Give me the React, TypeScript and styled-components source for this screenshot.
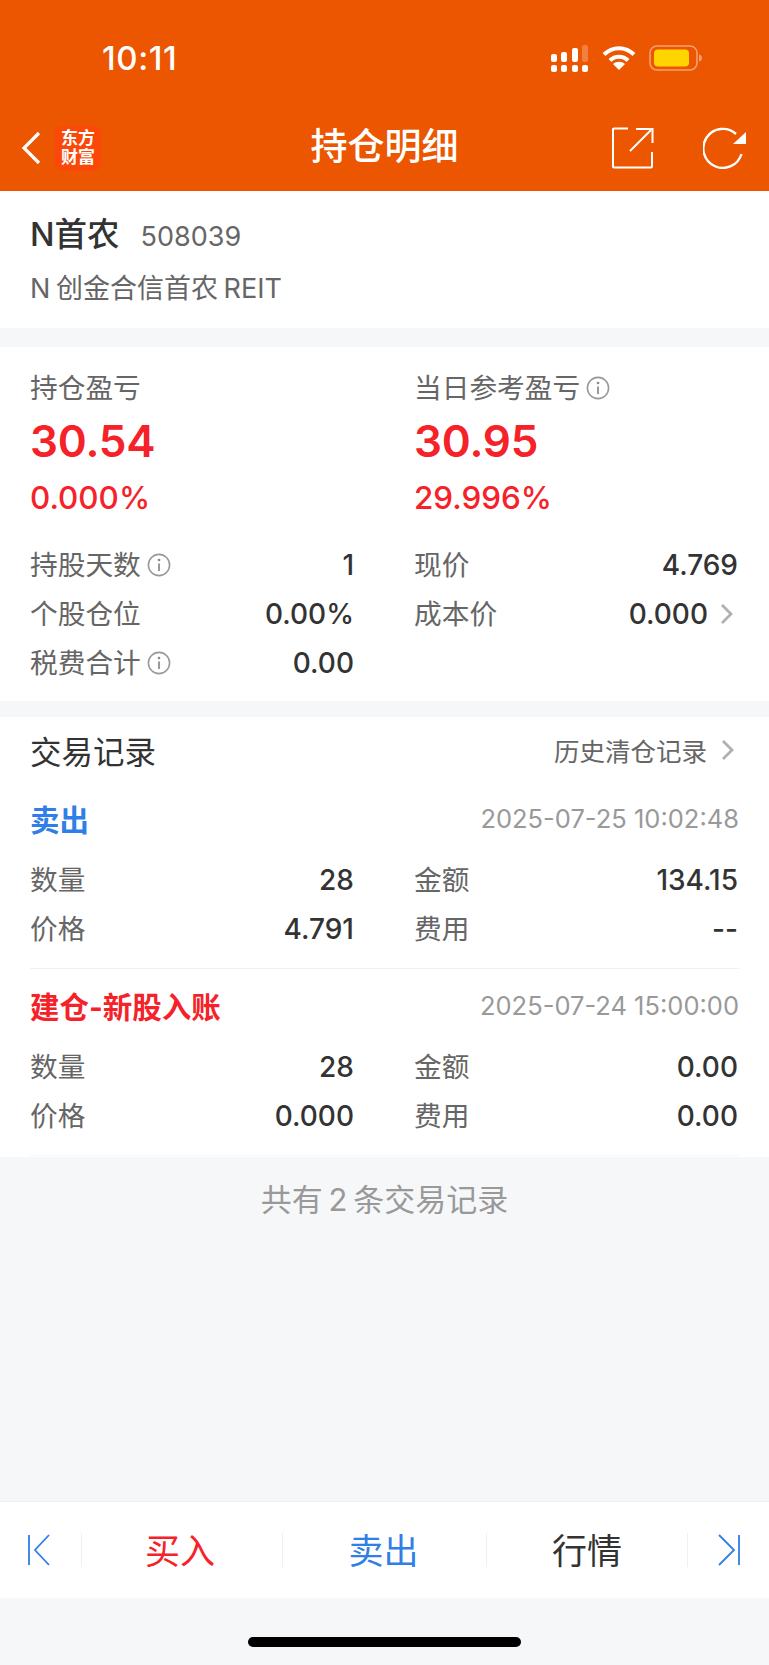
import React, { FC } from 'react';
import styled, { createGlobalStyle } from 'styled-components';

const FONT = `Inter, "Noto Sans CJK SC", sans-serif`;
const RED = '#f5222a';
const BLUE = '#2f7fe6';

const GlobalStyle = createGlobalStyle`
  html, body {
    margin: 0;
    padding: 0;
    background: #f6f7f9;
  }
  * {
    box-sizing: border-box;
  }
`;

const InfoIcon: FC = () => (
  <InfoSvg viewBox="0 0 24 24" fill="none">
    <circle cx="12" cy="12" r="10.6" stroke="#999" strokeWidth="1.6" />
    <circle cx="12" cy="7" r="1.3" fill="#888" />
    <path d="M12 10.5v7.5" stroke="#888" strokeWidth="1.7" />
  </InfoSvg>
);

const Chevron: FC = () => (
  <ChevronSvg viewBox="0 0 13 22" fill="none">
    <path d="M2 2l9 9-9 9" stroke="#b0b0b0" strokeWidth="2.8" />
  </ChevronSvg>
);

const StatusBar: FC = () => (
  <StatusRow>
    <Clock>10:11</Clock>
    <StatusIcons>
      <svg width="38" height="27" viewBox="0 0 38 27">
        <g fill="#fff">
          <rect x="0" y="20" width="6" height="7" rx="2" />
          <rect x="10" y="20" width="6" height="7" rx="2" />
          <rect x="21" y="20" width="6" height="7" rx="2" />
          <rect x="31" y="20" width="6" height="7" rx="2" />
          <rect x="0" y="9" width="6" height="8" rx="2" />
          <rect x="10" y="7" width="6" height="10" rx="2" />
          <rect x="21" y="3" width="6" height="14" rx="2" />
          <rect x="31" y="0" width="6" height="17" rx="2" opacity="0.25" />
        </g>
      </svg>
      <svg width="34" height="26" viewBox="0 0 34 26" fill="none">
        <path d="M2 9.5C10.5 1 23.500 1 32 9.5" stroke="#fff" strokeWidth="4" />
        <path d="M8 15.500c5-5 13-5 18 0" stroke="#fff" strokeWidth="4" />
        <path d="M17 25l-6-6c3.200-3 8.800-3 12 0z" fill="#fff" />
      </svg>
      <svg width="54" height="26" viewBox="0 0 54 26" fill="none">
        <rect x="1" y="1" width="47" height="24" rx="7" stroke="#fff" strokeOpacity="0.45" strokeWidth="1.500" />
        <rect x="5" y="4.500" width="35" height="17" rx="4" fill="#ffd400" />
        <path d="M50 9.500c2 .5 3 2 3 3.500s-1 3-3 3.500z" fill="#fff" fillOpacity="0.45" />
      </svg>
    </StatusIcons>
  </StatusRow>
);

interface StatProps {
  label: string;
  value: string;
  info?: boolean;
  more?: boolean;
}

const Stat: FC<StatProps> = ({ label, value, info, more }) => (
  <StatRow>
    <Label>
      {label}
      {info && <InfoIcon />}
    </Label>
    <Value>
      {value}
      {more && <Chevron />}
    </Value>
  </StatRow>
);

interface TradeProps {
  title: string;
  time: string;
  color: string;
  qty: string;
  amount: string;
  price: string;
  fee: string;
  last?: boolean;
}

const Trade: FC<TradeProps> = ({ title, time, color, qty, amount, price, fee, last }) => (
  <TradeBlock $last={last}>
    <TradeHead>
      <TradeTitle $color={color}>{title}</TradeTitle>
      <TradeTime>{time}</TradeTime>
    </TradeHead>
    <StatGrid>
      <Stat label="数量" value={qty} />
      <Stat label="金额" value={amount} />
      <Stat label="价格" value={price} />
      <Stat label="费用" value={fee} />
    </StatGrid>
  </TradeBlock>
);

const App: FC = () => (
  <>
    <GlobalStyle />
    <Page>
      <Header>
        <StatusBar />
        <NavBar>
          <NavLeft>
            <svg width="22" height="36" viewBox="0 0 22 36" fill="none">
              <path d="M18 3L3 18l15 15" stroke="#fff" strokeWidth="3.200" />
            </svg>
            <Logo>
              <span>东方</span>
              <span>财富</span>
            </Logo>
          </NavLeft>
          <NavTitle>持仓明细</NavTitle>
          <NavRight>
            <svg width="42" height="42" viewBox="0 0 42 42" fill="none">
              <path d="M16 1.500H2a1 1 0 0 0-1 1v37a1 1 0 0 0 1 1h37a1 1 0 0 0 1-1V25" stroke="#fff" strokeWidth="2" />
              <path d="M18 24L39 3" stroke="#fff" strokeWidth="2" />
              <path d="M24 2h16.500v14" stroke="#fff" strokeWidth="2" />
            </svg>
            <svg width="43" height="42" viewBox="0 0 43 42" fill="none">
              <path d="M38.500 27A19.500 19.500 0 1 1 33 7" stroke="#fff" strokeWidth="2.400" />
              <path d="M43 5v12H30z" fill="#fff" />
            </svg>
          </NavRight>
        </NavBar>
      </Header>

      <StockCard>
        <StockLine>
          <StockName>N首农</StockName>
          <StockCode>508039</StockCode>
        </StockLine>
        <StockFull>N 创金合信首农 REIT</StockFull>
      </StockCard>

      <SummaryCard>
        <ProfitGrid>
          <div>
            <Label>持仓盈亏</Label>
            <BigNumber>30.54</BigNumber>
            <Percent>0.000%</Percent>
          </div>
          <div>
            <Label>
              当日参考盈亏
              <InfoIcon />
            </Label>
            <BigNumber>30.95</BigNumber>
            <Percent>29.996%</Percent>
          </div>
        </ProfitGrid>
        <StatGrid>
          <Stat label="持股天数" value="1" info />
          <Stat label="现价" value="4.769" />
          <Stat label="个股仓位" value="0.00%" />
          <Stat label="成本价" value="0.000" more />
          <Stat label="税费合计" value="0.00" info />
        </StatGrid>
      </SummaryCard>

      <RecordsCard>
        <RecordsHead>
          <RecordsTitle>交易记录</RecordsTitle>
          <HistoryLink>
            历史清仓记录
            <Chevron />
          </HistoryLink>
        </RecordsHead>
        <Trade title="卖出" time="2025-07-25 10:02:48" color={BLUE} qty="28" amount="134.15" price="4.791" fee="--" />
        <Trade title="建仓-新股入账" time="2025-07-24 15:00:00" color={RED} qty="28" amount="0.00" price="0.000" fee="0.00" last />
      </RecordsCard>

      <RecordsCount>共有 2 条交易记录</RecordsCount>

      <BottomBar>
        <EdgeButton $side="left">
          <svg width="24" height="32" viewBox="0 0 24 32" fill="none">
            <path d="M2 1v30M22 1L8 16l14 15" stroke={BLUE} strokeWidth="1.800" />
          </svg>
        </EdgeButton>
        <ActionButton $color={RED} $inset={4}>买入</ActionButton>
        <ActionButton $color={BLUE} $inset={2}>卖出</ActionButton>
        <ActionButton $color="#333">行情</ActionButton>
        <EdgeButton $side="right">
          <svg width="24" height="32" viewBox="0 0 24 32" fill="none">
            <path d="M22 1v30M2 1l15 15L2 31" stroke={BLUE} strokeWidth="1.800" />
          </svg>
        </EdgeButton>
      </BottomBar>
      <HomeArea>
        <HomeBar />
      </HomeArea>
    </Page>
  </>
);

const Page = styled.div`
  display: flex;
  flex-direction: column;
  width: 769px;
  height: 1665px;
  overflow: hidden;
  background: #f6f7f9;
  font-family: ${FONT};
  color: #333;
`;

const Header = styled.header`
  height: 191px;
  flex: none;
  padding-top: 40px;
  background: #ec5600;
`;

const StatusRow = styled.div`
  display: flex;
  align-items: center;
  justify-content: space-between;
  height: 36px;
  padding: 0 66px 0 102px;
`;

const Clock = styled.span`
  font-size: 33px;
  font-weight: 500;
  letter-spacing: 0.6px;
  color: #fff;
`;

const StatusIcons = styled.div`
  display: flex;
  align-items: center;
  gap: 13px;
`;

const NavBar = styled.div`
  position: relative;
  display: flex;
  align-items: center;
  justify-content: space-between;
  height: 46px;
  margin-top: 49px;
  padding: 0 23px 0 21px;
`;

const NavLeft = styled.div`
  display: flex;
  align-items: center;
  gap: 12px;
`;

const Logo = styled.div`
  display: flex;
  flex-direction: column;
  align-items: center;
  justify-content: center;
  width: 46px;
  height: 45px;
  border-radius: 8px;
  background: #fb4809;
  color: #fff;
  font-size: 17px;
  font-weight: 700;
  line-height: 19px;
`;

const NavTitle = styled.h1`
  position: absolute;
  top: -1px;
  left: 0;
  right: 0;
  margin: 0;
  text-align: center;
  font-size: 37px;
  font-weight: 500;
  line-height: 46px;
  color: #fff;
`;

const NavRight = styled.div`
  display: flex;
  align-items: center;
  gap: 49px;
`;

const StockCard = styled.section`
  height: 137px;
  flex: none;
  padding: 17px 30px 0;
  background: #fff;
`;

const StockLine = styled.div`
  display: flex;
  align-items: baseline;
  gap: 21px;
`;

const StockName = styled.span`
  font-size: 32.5px;
  font-weight: 500;
  color: #333;
`;

const StockCode = styled.span`
  font-size: 27px;
  color: #666;
`;

const StockFull = styled.div`
  margin-top: 12px;
  font-size: 27px;
  word-spacing: -2px;
  color: #666;
`;

const SummaryCard = styled.section`
  height: 354px;
  flex: none;
  margin-top: 19px;
  padding: 21px 30px 0;
  background: #fff;
`;

const ProfitGrid = styled.div`
  display: grid;
  grid-template-columns: 324px 324px;
  column-gap: 60px;
  margin-bottom: 22px;
`;

const BigNumber = styled.div`
  margin-top: 5px;
  font-size: 44px;
  font-weight: 600;
  letter-spacing: -0.2px;
  line-height: 56px;
  color: ${RED};
`;

const Percent = styled.div`
  margin-top: 9px;
  font-size: 31.4px;
  font-weight: 500;
  line-height: 40px;
  color: ${RED};
`;

const StatGrid = styled.div`
  display: grid;
  grid-template-columns: 324px 324px;
  column-gap: 60px;
`;

const StatRow = styled.div`
  display: flex;
  align-items: center;
  justify-content: space-between;
  height: 49px;
`;

const Label = styled.div`
  display: flex;
  align-items: center;
  gap: 6px;
  font-size: 27.7px;
  line-height: 40px;
  color: #666;
`;

const Value = styled.div`
  display: flex;
  align-items: center;
  gap: 12px;
  font-size: 28px;
  font-weight: 500;
  color: #333;
`;

const InfoSvg = styled.svg`
  width: 24px;
  height: 24px;
`;

const ChevronSvg = styled.svg`
  width: 13px;
  height: 22px;
  margin-right: 5px;
`;

const RecordsCard = styled.section`
  height: 440px;
  flex: none;
  margin-top: 16px;
  padding: 0 30px;
  background: #fff;
`;

const RecordsHead = styled.div`
  display: flex;
  align-items: center;
  justify-content: space-between;
  height: 65px;
`;

const RecordsTitle = styled.h2`
  margin: 0;
  font-size: 31.5px;
  font-weight: 400;
  color: #333;
`;

const HistoryLink = styled.div`
  display: flex;
  align-items: center;
  gap: 14px;
  font-size: 25.5px;
  color: #666;
`;

const TradeBlock = styled.div<{ $last?: boolean }>`
  height: 187px;
  padding-top: 9px;
  border-bottom: 1px solid ${({ $last }) => ($last ? '#f6f7f9' : '#eef0f2')};
`;

const TradeHead = styled.div`
  display: flex;
  align-items: center;
  justify-content: space-between;
  height: 54px;
  margin-bottom: 10px;
`;

const TradeTitle = styled.div<{ $color: string }>`
  font-size: 29.5px;
  font-weight: 700;
  color: ${({ $color }) => $color};
`;

const TradeTime = styled.div`
  font-size: 25.5px;
  color: #999;
`;

const RecordsCount = styled.div`
  height: 344px;
  flex: none;
  padding-top: 18px;
  text-align: center;
  font-size: 31px;
  word-spacing: -3px;
  color: #999;
`;

const BottomBar = styled.nav`
  display: grid;
  grid-template-columns: 81px 201px 204px 201px 1fr;
  align-items: center;
  height: 97px;
  flex: none;
  border-top: 1px solid #eef0f2;
  background: #fff;
`;

const EdgeButton = styled.div<{ $side: 'left' | 'right' }>`
  display: flex;
  align-items: center;
  justify-content: center;
  height: 34px;
  padding-right: ${({ $side }) => ($side === 'left' ? '4px' : '0')};
  & + div {
    border-left: 1px solid #eef0f2;
  }
`;

const ActionButton = styled.div<{ $color: string; $inset?: number }>`
  height: 34px;
  display: flex;
  align-items: center;
  justify-content: center;
  padding-right: ${({ $inset }) => $inset ?? 0}px;
  padding-bottom: 4px;
  font-size: 35px;
  color: ${({ $color }) => $color};
  & + div {
    border-left: 1px solid #eef0f2;
  }
`;

const HomeArea = styled.div`
  flex: 1;
  display: flex;
  justify-content: center;
  padding-top: 39px;
`;

const HomeBar = styled.div`
  width: 273px;
  height: 10px;
  border-radius: 5px;
  background: #000;
`;

export default App;
